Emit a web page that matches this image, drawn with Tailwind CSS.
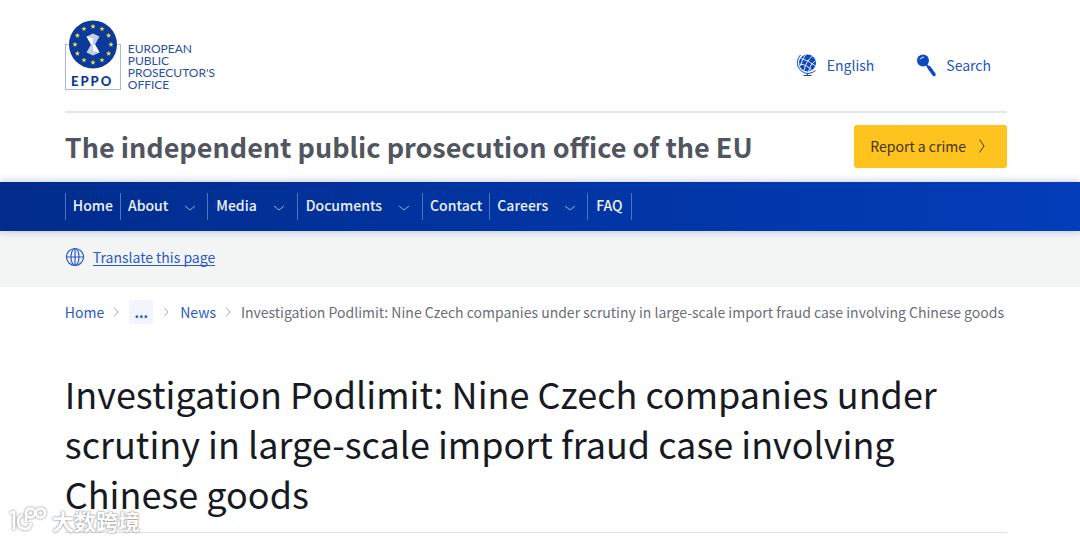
<!DOCTYPE html>
<html lang="en">
<head>
    <meta charset="UTF-8">
    <meta name="viewport" content="width=device-width, initial-scale=1.0">
    <title>Investigation Podlimit | European Public Prosecutor's Office</title>
    <script src="https://cdn.jsdelivr.net/npm/@tailwindcss/browser@4"></script>
</head>
<body class="bg-white font-['Noto_Sans_CJK_SC','Noto_Sans',sans-serif] text-[14px] leading-5 text-[#171a22]">
    <!-- Site header -->
    <header>
        <div class="mr-[73px] ml-[6%]">
            <div class="flex items-start justify-between border-b-2 border-[#e3e7f0] pt-5 pb-5">
                <a href="#" class="flex items-start text-[#2b4ea8]" aria-label="European Public Prosecutor's Office">
                    <svg class="h-[71px] w-14" viewBox="0 0 56 71">
                        <rect x="0.5" y="24.5" width="55" height="45" fill="#fff" stroke="#a9b8e0"/>
                        <circle cx="28" cy="25" r="25" fill="#fff"/>
                        <circle cx="28" cy="24.500" r="24" fill="#0c3a9c"/>
                        <defs>
                            <path id="star" fill="#e6e03c" d="M0-2.700.7-.9 2.600-.8 1.100.4 1.600 2.200 0 1.200-1.600 2.200-1.100.4-2.600-.8-.7-.9Z"/>
                        </defs>
                        <use href="#star" x="28" y="6.500"/>
                        <use href="#star" x="37" y="8.900"/>
                        <use href="#star" x="43.600" y="15.500"/>
                        <use href="#star" x="46" y="24.500"/>
                        <use href="#star" x="43.600" y="33.500"/>
                        <use href="#star" x="37" y="40.100"/>
                        <use href="#star" x="28" y="42.500"/>
                        <use href="#star" x="19" y="40.100"/>
                        <use href="#star" x="12.400" y="33.500"/>
                        <use href="#star" x="10" y="24.500"/>
                        <use href="#star" x="12.400" y="15.500"/>
                        <use href="#star" x="19" y="8.900"/>
                        <path fill="#c3cde6" d="M21.500 16.500 28 13.500l6.500 3L30 24.500l4.500 8-6.500 3-6.500-3 4.500-8Z"/>
                        <path fill="#fff" d="M21.500 16.500 28 18.500v6h-2ZM28 24.500h2l4.500 8L28 31Z"/>
                        <text x="6" y="66" fill="#0c3a9c" font-family="Lato, sans-serif" font-weight="900" font-size="13" letter-spacing="2">EPPO</text>
                    </svg>
                    <span class="mt-[23px] ml-[7px] font-[Lato,sans-serif] text-[12px] leading-[12px] text-[#2b4ea8]">EUROPEAN<br>PUBLIC<br>PROSECUTOR'S<br>OFFICE</span>
                </a>
                <div class="mt-[33px] mr-4 flex items-center gap-10 text-[#2554c7]">
                    <button type="button" class="flex items-center gap-2">
                        <svg class="size-6" viewBox="0 0 24 24" fill="none" stroke="#0d47c4">
                            <circle cx="12.500" cy="10" r="8.500" fill="#0d47c4" stroke="none"/>
                            <g stroke="#fff" stroke-width=".9">
                                <path d="M6 5.500Q13 7 20.500 13M4.500 11Q12 11.500 17 17.500M17.500 3Q11 8 9 17.500M20.500 7.500Q15 11 13.500 18.500M10.500 2Q7 6 5.500 13"/>
                            </g>
                            <path d="M5.500 2Q1 7 3 13.500Q6 20 13 20.500Q17.500 20.300 20.500 17.500M12.500 20.500v2M8.500 22.500h8"/>
                        </svg>
                        English
                    </button>
                    <button type="button" class="flex items-center gap-2">
                        <svg class="size-6" viewBox="0 0 24 24">
                            <circle cx="9" cy="7.500" r="6" fill="#0d47c4"/>
                            <path d="M6 6.500Q7 4 10 4.200" fill="none" stroke="#fff" stroke-width="1"/>
                            <path d="M12.500 12l2.500 2.500" stroke="#0d47c4" stroke-width="2"/>
                            <path d="M15 14.500l5 7" stroke="#0d47c4" stroke-width="3.500" stroke-linecap="round"/>
                        </svg>
                        Search
                    </button>
                </div>
            </div>
            <div class="flex items-center justify-between pt-3 pb-3.5">
                <p class="text-[27px] leading-10 font-bold text-[#515560]">The independent public prosecution office of the EU</p>
                <a href="#" class="flex h-[43px] items-center gap-3 rounded-[3px] bg-[#ffc31f] pr-[21px] pb-0.5 pl-4 text-[#40340f]">
                    Report a crime
                    <svg class="h-4 w-2" viewBox="0 0 8 16" fill="none" stroke="currentColor"><path d="M1.500 1.500 6 8l-4.500 6.500"/></svg>
                </a>
            </div>
        </div>

        <!-- Main navigation -->
        <nav class="relative bg-linear-to-r from-[#012c8c] to-[#033db9] px-[6%] py-[11px] font-medium text-[#eef2fc] shadow-[0_0_8px_rgba(3,50,150,0.3)]">
            <ul class="flex h-[27px] items-stretch border-l border-[#4d72c6]">
                <li class="flex border-r border-[#4d72c6]"><a href="#" class="flex items-center px-[7px] pb-1">Home</a></li>
                <li class="flex border-r border-[#4d72c6]">
                    <a href="#" class="flex items-center gap-4 px-[7px] pb-1">About
                        <svg class="mt-1.5 mr-1 h-2 w-3" viewBox="0 0 12 8" fill="none" stroke="#93acdf"><path d="M1 2l5 4 5-4"/></svg>
                    </a>
                </li>
                <li class="flex border-r border-[#4d72c6]">
                    <a href="#" class="flex items-center gap-4 px-2 pb-1">Media
                        <svg class="mt-1.5 mr-1 h-2 w-3" viewBox="0 0 12 8" fill="none" stroke="#93acdf"><path d="M1 2l5 4 5-4"/></svg>
                    </a>
                </li>
                <li class="flex border-r border-[#4d72c6]">
                    <a href="#" class="flex items-center gap-4 px-2 pb-1">Documents
                        <svg class="mt-1.5 mr-1 h-2 w-3" viewBox="0 0 12 8" fill="none" stroke="#93acdf"><path d="M1 2l5 4 5-4"/></svg>
                    </a>
                </li>
                <li class="flex border-r border-[#4d72c6]"><a href="#" class="flex items-center px-[7px] pb-1">Contact</a></li>
                <li class="flex border-r border-[#4d72c6]">
                    <a href="#" class="flex items-center gap-4 px-[7px] pb-1">Careers
                        <svg class="mt-1.5 mr-1 h-2 w-3" viewBox="0 0 12 8" fill="none" stroke="#93acdf"><path d="M1 2l5 4 5-4"/></svg>
                    </a>
                </li>
                <li class="flex border-r border-[#4d72c6]"><a href="#" class="flex items-center px-2 pb-1">FAQ</a></li>
            </ul>
        </nav>
    </header>

    <!-- Translate bar -->
    <div class="flex h-14 items-center gap-2 bg-[#f3f5f5] px-[6%] pb-1 text-[#2a59c9]">
        <svg class="size-5" viewBox="0 0 20 20" fill="none" stroke="currentColor" stroke-width="1.200">
            <circle cx="10" cy="10" r="8.500"/>
            <ellipse cx="10" cy="10" rx="4" ry="8.500"/>
            <path d="M10 1.500v17M1.500 10h17"/>
        </svg>
        <a href="#" class="border-b border-[#2a59c9] leading-4">Translate this page</a>
    </div>

    <main class="mr-[73px] ml-[6%]">
        <!-- Breadcrumb -->
        <nav class="flex items-center pt-[13px] text-[#2a59c9]" aria-label="Breadcrumb">
            <a href="#">Home</a>
            <svg class="mx-[9px] h-3 w-[7px]" viewBox="0 0 7 12" fill="none" stroke="#a5a8ae"><path d="M1.500 2 5 6l-3.500 4"/></svg>
            <button type="button" class="h-6 w-6 rounded-[2px] bg-[#f2f5fd] font-bold leading-5">...</button>
            <svg class="mx-[10px] h-3 w-[7px]" viewBox="0 0 7 12" fill="none" stroke="#a5a8ae"><path d="M1.500 2 5 6l-3.500 4"/></svg>
            <a href="#">News</a>
            <svg class="mx-[9px] h-3 w-[7px]" viewBox="0 0 7 12" fill="none" stroke="#a5a8ae"><path d="M1.500 2 5 6l-3.500 4"/></svg>
            <span class="whitespace-nowrap text-[#6b6e75]">Investigation Podlimit: Nine Czech companies under scrutiny in large-scale import fraud case involving Chinese goods</span>
        </nav>

        <h1 class="mt-11 border-b border-[#d9dff0] pb-3.5 text-[36px] leading-[50px]">Investigation Podlimit: Nine Czech companies under scrutiny in large-scale import fraud case involving Chinese goods</h1>
    </main>

    <!-- Watermark -->
    <div class="absolute top-[505px] left-2 flex items-center gap-1 text-[22px] leading-[30px] font-bold text-white [text-shadow:0_0_2px_#888,0_0_2px_#aaa]">
        <svg class="h-7 w-10 drop-shadow-[0_0_1px_#777]" viewBox="0 0 40 28" fill="none" stroke="#fff" stroke-width="2.800">
            <path d="M2 7l4-1v18M15 9q-5 1-5 7t7 7q5 0 6-6M18 7a4.500 4.500 0 1 0 9 0 4.500 4.500 0 1 0-9 0v9M28 7a4.500 4.500 0 1 0 9 0 4.500 4.500 0 1 0-9 0"/>
        </svg>
        <span>大数跨境</span>
    </div>
</body>
</html>
